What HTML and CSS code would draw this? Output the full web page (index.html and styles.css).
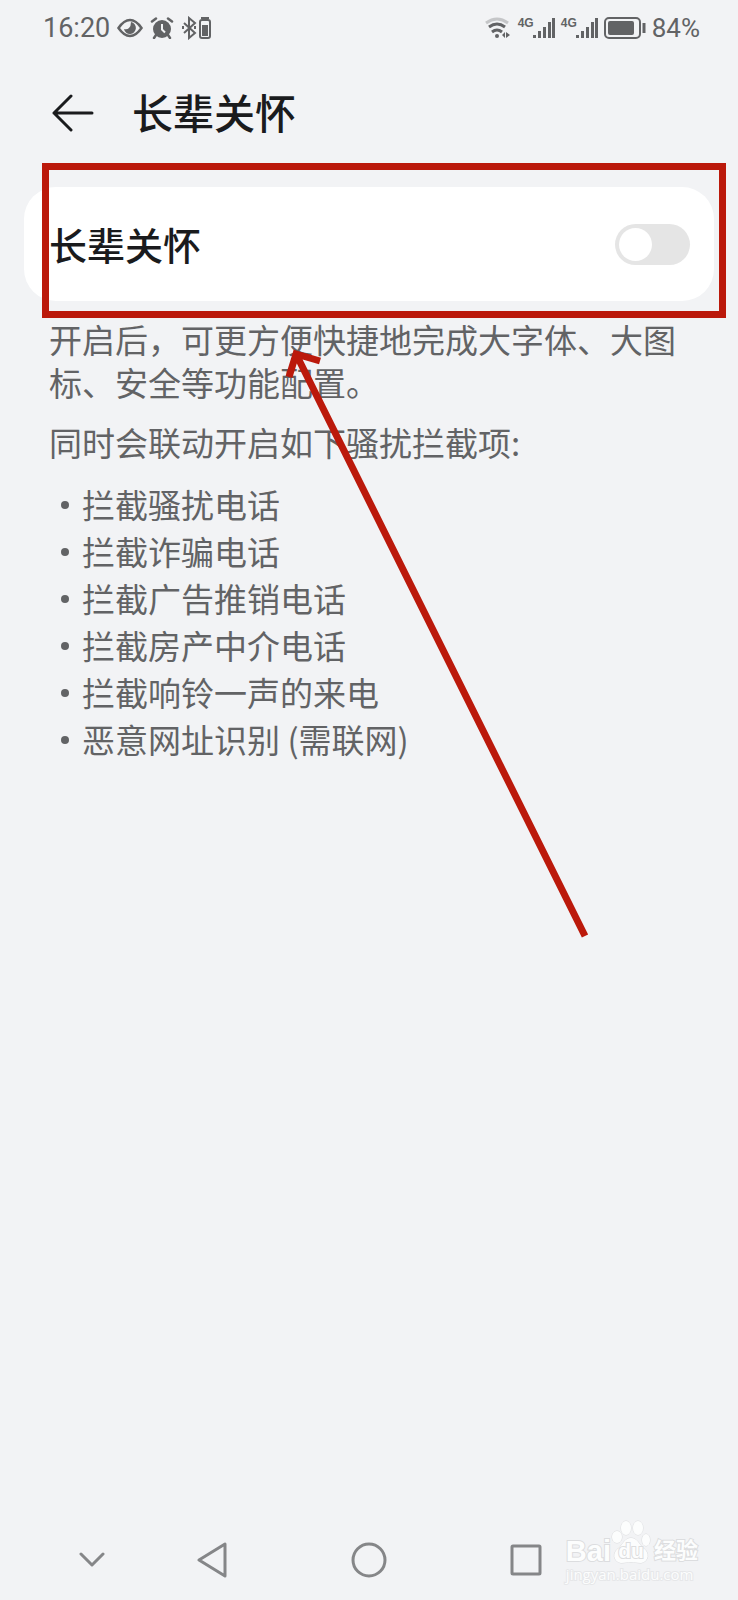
FILE: index.html
```html
<!DOCTYPE html>
<html lang="zh-CN">
<head>
    <meta charset="UTF-8">
    <meta name="viewport" content="width=device-width, initial-scale=1.0">
    <title>长辈关怀</title>
    <link rel="stylesheet" href="styles.css">
</head>
<body>
    <div class="status_bar">
        <div class="status_left">
            <span class="status_text">16:20</span>
            <svg width="26" height="20" viewBox="0 0 26 20">
                <path d="M1.500 10Q7 2 13 2T24.500 10Q19 18 13 18T1.500 10Z" fill="none" stroke="#626365" stroke-width="2.500"/>
                <path d="M14 4a6 6 0 1 1-7 7q3 1 5-1t2-6z" fill="#626365"/>
            </svg>
            <svg width="24" height="22" viewBox="0 0 24 22">
                <circle cx="12" cy="12" r="9" fill="#626365"/>
                <path d="M2 4.500l4-3M22 4.500l-4-3M6 18l-2 3M18 18l2 3" stroke="#626365" stroke-width="2.500" stroke-linecap="round"/>
                <path d="M12 7v5.500l3 3" fill="none" stroke="#f2f3f5" stroke-width="2"/>
            </svg>
            <svg width="31" height="24" viewBox="0 0 31 24">
                <path d="M3 7l11 10-6 5V2l6 5L3 17" fill="none" stroke="#626365" stroke-width="2"/>
                <path d="M1 10h2v3H1zM13 10h2v3h-2z" fill="#626365"/>
                <rect x="19" y="4" width="10" height="18" rx="2" fill="none" stroke="#626365" stroke-width="2"/>
                <path d="M20 1h8v2h-8zM21 9h6v11h-6z" fill="#626365"/>
            </svg>
        </div>
        <div class="status_right">
            <svg width="28" height="24" viewBox="0 0 28 24">
                <path d="M2 7q11-8 22 0" fill="none" stroke="#c5c6c8" stroke-width="3"/>
                <path d="M5 11q8-6 16 0M8 16q5-4 10 0" fill="none" stroke="#626365" stroke-width="3"/>
                <circle cx="13" cy="20" r="2" fill="#626365"/>
                <path d="M18 19l3-3v6zM26 19l-4-3v6z" fill="#626365"/>
            </svg>
            <div class="signal">
                <span>4G</span>
                <svg width="22" height="22" viewBox="0 0 22 22">
                    <path d="M1.500 18v3M6.500 14v7M11.500 10v11M16.500 5v16M20.500 1v20" stroke="#626365" stroke-width="3"/>
                </svg>
            </div>
            <div class="signal">
                <span>4G</span>
                <svg width="22" height="22" viewBox="0 0 22 22">
                    <path d="M1.500 18v3M6.500 14v7M11.500 10v11M16.500 5v16M20.500 1v20" stroke="#626365" stroke-width="3"/>
                </svg>
            </div>
            <svg width="42" height="22" viewBox="0 0 42 22">
                <rect x="1" y="1" width="35" height="20" rx="4" fill="none" stroke="#626365" stroke-width="2"/>
                <rect x="4" y="4" width="26" height="14" rx="2" fill="#626365"/>
                <path d="M40 6v10" stroke="#626365" stroke-width="3"/>
            </svg>
            <span class="status_text">84%</span>
        </div>
    </div>

    <header class="header">
        <button class="back" aria-label="返回">
            <svg width="42" height="38" viewBox="0 0 42 38">
                <path d="M40 19H2M19 2L2 19l17 17" fill="none" stroke="#1a1b1d" stroke-width="3" stroke-linecap="round" stroke-linejoin="round"/>
            </svg>
        </button>
        <h1>长辈关怀</h1>
    </header>

    <main>
        <div class="card">
            <label for="care">长辈关怀</label>
            <input type="checkbox" role="switch" id="care" class="switch" />
            <div class="mark_box"></div>
            <svg class="mark_arrow" width="310" height="600" viewBox="0 0 310 600">
                <path d="M305 595L16 13M9 36L16 13L40 20" fill="none" stroke="#bb190b" stroke-width="7"/>
            </svg>
        </div>

        <div class="desc">
            <p>开启后，可更方便快捷地完成大字体、大图标、安全等功能配置。</p>
            <p>同时会联动开启如下骚扰拦截项:</p>
            <ul>
                <li>拦截骚扰电话</li>
                <li>拦截诈骗电话</li>
                <li>拦截广告推销电话</li>
                <li>拦截房产中介电话</li>
                <li>拦截响铃一声的来电</li>
                <li>恶意网址识别 (需联网)</li>
            </ul>
        </div>
    </main>

    <nav class="nav_bar">
        <button aria-label="收起">
            <svg width="26" height="16" viewBox="0 0 26 16">
                <path d="M2 2l11 11L24 2"/>
            </svg>
        </button>
        <button aria-label="后退">
            <svg width="32" height="36" viewBox="0 0 32 36">
                <path d="M29 2v32L3 18z"/>
            </svg>
        </button>
        <button aria-label="主页">
            <svg width="36" height="36" viewBox="0 0 36 36">
                <circle cx="18" cy="18" r="16"/>
            </svg>
        </button>
        <button aria-label="多任务">
            <svg width="32" height="32" viewBox="0 0 32 32">
                <rect x="2" y="2" width="28" height="28" rx="1"/>
            </svg>
        </button>
    </nav>

    <div class="watermark">
        <div class="brand">
            <span class="bai">Bai</span>
            <span class="paw">
                <svg width="40" height="44" viewBox="0 0 40 44">
                    <g fill="#fcfdfd" stroke="#dcdddf">
                        <ellipse cx="6" cy="17" rx="5" ry="6"/>
                        <ellipse cx="15" cy="8" rx="5" ry="7"/>
                        <ellipse cx="27" cy="8" rx="5" ry="7"/>
                        <ellipse cx="35" cy="20" rx="4" ry="6"/>
                        <path d="M20 18c6 0 8 6 12 10 7 4 6 14-2 15-4 0-6-1-10-1s-6 1-10 1c-8-1-9-11-2-15 4-4 6-10 12-10z"/>
                    </g>
                </svg>
                <span class="du">du</span>
            </span>
            <span class="jingyan">经验</span>
        </div>
        <span class="site">jingyan.baidu.com</span>
    </div>
</body>
</html>
```

FILE: styles.css
```css
* {
    box-sizing: border-box;
}
body {
    margin: 0;
    min-height: 100vh;
    display: flex;
    flex-direction: column;
    position: relative;
    background-color: #f2f3f5;
    color: #626365;
    font-family: "Noto Sans CJK SC", sans-serif;
}
button {
    padding: 0;
    border: none;
    background: none;
}
svg {
    display: block;
}

/* status bar */
.status_bar {
    height: 56px;
    padding: 0 38px 0 43px;
    display: flex;
    justify-content: space-between;
    align-items: center;
}
.status_left,
.status_right {
    display: flex;
    align-items: center;
    column-gap: 7px;
}
.status_text {
    font-family: Roboto, sans-serif;
    font-size: 27px;
    line-height: 32px;
}
.status_right {
    column-gap: 6px;
}
.status_right .status_text {
    font-size: 26px;
}
.signal {
    display: flex;
    align-items: flex-start;
}
.signal span {
    font-family: "Liberation Sans Narrow", "Liberation Sans", sans-serif;
    font-size: 12px;
    font-weight: bold;
    line-height: 12px;
}
.signal svg {
    margin-left: -1px;
}

/* title */
.header {
    height: 114px;
    padding: 0 52px;
    display: flex;
    align-items: center;
    column-gap: 38px;
}
.header h1 {
    margin: 0;
    padding-bottom: 4px;
    color: #1a1b1d;
    font-size: 41px;
    font-weight: 500;
    line-height: 60px;
}

/* switch card */
.card {
    position: relative;
    height: 114px;
    margin: 17px 24px 0;
    padding: 0 24px 0 25px;
    display: flex;
    justify-content: space-between;
    align-items: center;
    background-color: #fff;
    border-radius: 32px;
}
.card label {
    color: #1a1b1d;
    font-size: 38px;
    font-weight: 500;
    line-height: 56px;
}
.switch {
    appearance: none;
    width: 75px;
    height: 41px;
    margin: 0;
    padding: 4px;
    border-radius: 21px;
    background-color: #e5e5e5;
}
.switch::before {
    content: "";
    display: block;
    width: 33px;
    height: 33px;
    border-radius: 50%;
    background-color: #fff;
}
.switch:checked::before {
    margin-left: auto;
}
.mark_box {
    position: absolute;
    top: -24px;
    right: -12px;
    bottom: -17px;
    left: 18px;
    border: 7px solid #bb190b;
    pointer-events: none;
}
.mark_arrow {
    position: absolute;
    top: 154px;
    left: 256px;
    pointer-events: none;
}

/* description */
.desc {
    padding: 17px 49px;
    font-size: 33px;
    line-height: 43px;
}
.desc p {
    margin: 0 0 17px;
}
.desc ul {
    margin: 0;
    padding: 0;
    list-style: none;
}
.desc li {
    display: flex;
    align-items: center;
    line-height: 47px;
}
.desc li::before {
    content: "";
    width: 8px;
    height: 8px;
    margin: 0 13px 0 12px;
    border-radius: 50%;
    background-color: #626365;
}

/* navigation bar */
.nav_bar {
    height: 80px;
    margin-top: auto;
    padding: 0 50px;
    display: grid;
    grid-template-columns: 84fr 157fr 157fr 157fr 84fr;
}
.nav_bar button {
    display: flex;
    justify-content: center;
    align-items: center;
}
.nav_bar svg {
    fill: none;
    stroke: #858688;
    stroke-width: 3;
    stroke-linecap: round;
    stroke-linejoin: round;
}

/* watermark */
.watermark {
    position: absolute;
    right: 40px;
    bottom: 16px;
    color: #fcfdfd;
    font-family: "Liberation Sans", "Noto Sans CJK SC", sans-serif;
}
.brand {
    display: flex;
    align-items: flex-end;
    font-weight: bold;
    line-height: 26px;
    -webkit-text-stroke: 2px #dcdddf;
    paint-order: stroke fill;
}
.bai {
    font-size: 29px;
}
.paw {
    position: relative;
}
.du {
    position: absolute;
    right: 0;
    bottom: 0;
    left: 0;
    font-size: 21px;
    text-align: center;
}
.jingyan {
    margin-left: 3px;
    font-size: 22px;
}
.site {
    display: block;
    font-family: "Open Sans", sans-serif;
    font-size: 15px;
    line-height: 20px;
    -webkit-text-stroke: 2px #e6e7e9;
    paint-order: stroke fill;
}
```
